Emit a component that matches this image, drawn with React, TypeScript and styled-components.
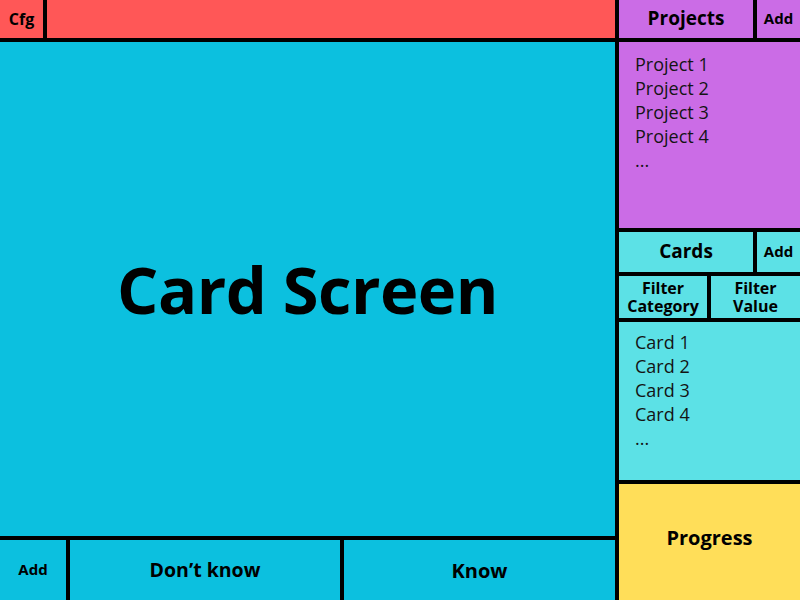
import styled, { createGlobalStyle } from "styled-components";

const GlobalStyle = createGlobalStyle`
  html, body {
    margin: 0;
    padding: 0;
    background: #000;
  }
  * {
    box-sizing: border-box;
  }
`;

const Frame = styled.div`
  width: 800px;
  height: 600px;
  display: grid;
  grid-template-columns: 615px 181px;
  gap: 4px;
  background: #000;
  font-family: "Open Sans", "Noto Sans", sans-serif;
  color: #000;
  overflow: hidden;
`;

const Column = styled.div<{ $rows: string }>`
  display: grid;
  grid-template-rows: ${(p) => p.$rows};
  gap: 4px;
  min-height: 0;
`;

const Row = styled.div<{ $cols: string }>`
  display: grid;
  grid-template-columns: ${(p) => p.$cols};
  gap: 4px;
  min-height: 0;
`;

const Cell = styled.div<{ $bg: string; $size?: number; $lift?: number }>`
  display: flex;
  align-items: center;
  justify-content: center;
  text-align: center;
  background: ${(p) => p.$bg};
  font-weight: 700;
  font-size: ${(p) => p.$size ?? 19}px;
  line-height: 1.15;
  padding-bottom: ${(p) => p.$lift ?? 0}px;
`;

const Title = styled.div`
  font-size: 65px;
  font-weight: 700;
  letter-spacing: -0.5px;
`;

const List = styled.ul<{ $bg: string; $top: number }>`
  margin: 0;
  padding: ${(p) => p.$top}px 0 0 16px;
  list-style: none;
  background: ${(p) => p.$bg};
  font-size: 18px;
  line-height: 24px;
  color: #141414;
`;

const colors = {
  red: "#ff5757",
  cyan: "#0cc0df",
  purple: "#cb6ce6",
  aqua: "#5ce1e6",
  yellow: "#ffde59",
};

export default function App() {
  return (
    <>
      <GlobalStyle />
      <Frame>
        <Column $rows="38px 494px 60px">
          <Row $cols="43px 1fr">
            <Cell $bg={colors.red} $size={16}>Cfg</Cell>
            <Cell $bg={colors.red} />
          </Row>
          <Cell $bg={colors.cyan}>
            <Title>Card Screen</Title>
          </Cell>
          <Row $cols="66px 270px 1fr">
            <Cell $bg={colors.cyan} $size={15}>Add</Cell>
            <Cell $bg={colors.cyan} $size={19.5}>Don’t know</Cell>
            <Cell $bg={colors.cyan} $size={20}>Know</Cell>
          </Row>
        </Column>
        <Column $rows="38px 186px 40px 42px 158px 116px">
          <Row $cols="134px 1fr">
            <Cell $bg={colors.purple}>Projects</Cell>
            <Cell $bg={colors.purple} $size={15}>Add</Cell>
          </Row>
          <List $bg={colors.purple} $top={10}>
            <li>Project 1</li>
            <li>Project 2</li>
            <li>Project 3</li>
            <li>Project 4</li>
            <li>...</li>
          </List>
          <Row $cols="134px 1fr">
            <Cell $bg={colors.aqua}>Cards</Cell>
            <Cell $bg={colors.aqua} $size={15}>Add</Cell>
          </Row>
          <Row $cols="88px 1fr">
            <Cell $bg={colors.aqua} $size={16}>Filter<br />Category</Cell>
            <Cell $bg={colors.aqua} $size={16}>Filter<br />Value</Cell>
          </Row>
          <List $bg={colors.aqua} $top={8}>
            <li>Card 1</li>
            <li>Card 2</li>
            <li>Card 3</li>
            <li>Card 4</li>
            <li>...</li>
          </List>
          <Cell $bg={colors.yellow} $size={20} $lift={9}>Progress</Cell>
        </Column>
      </Frame>
    </>
  );
}
